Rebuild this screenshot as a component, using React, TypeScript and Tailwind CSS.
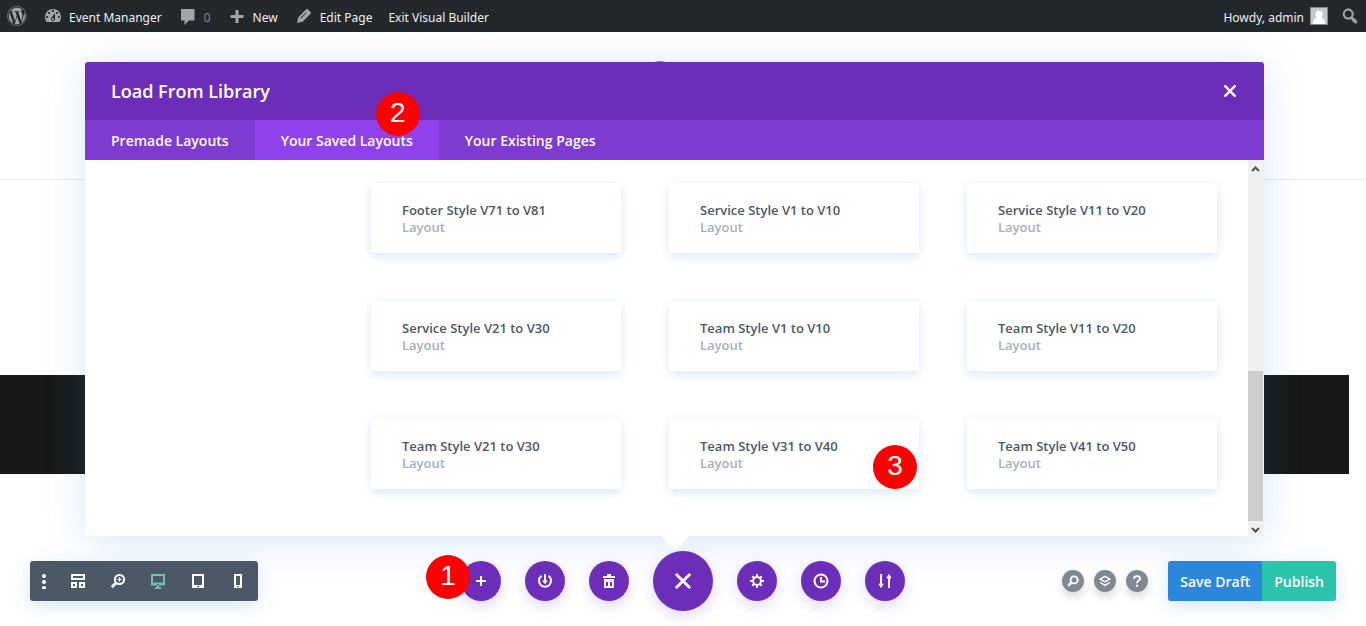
import type { ReactNode } from 'react'
import { FaWordpress } from 'react-icons/fa'

const layouts = [
  'Footer Style V71 to V81',
  'Service Style V1 to V10',
  'Service Style V11 to V20',
  'Service Style V21 to V30',
  'Team Style V1 to V10',
  'Team Style V11 to V20',
  'Team Style V21 to V30',
  'Team Style V31 to V40',
  'Team Style V41 to V50',
]

function Marker({ children, className }: { children: ReactNode; className: string }) {
  return (
    <span
      className={`absolute z-10 flex size-11 items-center justify-center rounded-full bg-[#ff0000] pb-0.5 font-['Liberation_Sans',sans-serif] text-[28px] leading-none font-normal text-white ${className}`}
    >
      {children}
    </span>
  )
}

function DashIcon({ d }: { d: string }) {
  return (
    <svg viewBox="0 0 20 20" className="size-5 shrink-0 fill-[#a0a5aa]" aria-hidden="true">
      <path d={d} />
    </svg>
  )
}

function Glyph({ children, size = 16 }: { children: ReactNode; size?: number }) {
  return (
    <svg width={size} height={size} viewBox="0 0 16 16" fill="none" stroke="currentColor" strokeWidth="2" aria-hidden="true">
      {children}
    </svg>
  )
}

function AdminLink({ href, icon, children }: { href: string; icon?: string; children: ReactNode }) {
  return (
    <a href={href} className="flex items-center gap-1.5">
      {icon && <DashIcon d={icon} />}
      <span className="pt-1">{children}</span>
    </a>
  )
}

function AdminBar() {
  return (
    <header className="flex h-8 items-center justify-between bg-[#23282d] pr-1.5 pl-[7px] font-['Noto_Sans',sans-serif] text-[12px] text-[#eeeeee]">
      <nav className="flex items-center gap-4 whitespace-nowrap">
        <a href="#wordpress" aria-label="About WordPress">
          <FaWordpress className="size-5 text-[#a0a5aa]" />
        </a>
        <AdminLink
          href="#site"
          icon="M3.76 16h12.48c1.1-1.37 1.76-3.11 1.76-5 0-4.42-3.58-8-8-8s-8 3.58-8 8c0 1.89.66 3.63 1.76 5zM10 4c.55 0 1 .45 1 1s-.45 1-1 1-1-.45-1-1 .45-1 1-1zM6 6c.55 0 1 .45 1 1s-.45 1-1 1-1-.45-1-1 .45-1 1-1zm8 0c.55 0 1 .45 1 1s-.45 1-1 1-1-.45-1-1 .45-1 1-1zm-5.37 5.55L12 7v6c0 1.1-.9 2-2 2s-2-.9-2-2c0-.57.24-1.08.63-1.45zM4 10c.55 0 1 .45 1 1s-.45 1-1 1-1-.45-1-1 .45-1 1-1zm12 0c.55 0 1 .45 1 1s-.45 1-1 1-1-.45-1-1 .45-1 1-1zm-5 3c0-.55-.45-1-1-1s-1 .45-1 1 .45 1 1 1 1-.45 1-1z"
        >
          Event Mananger
        </AdminLink>
        <AdminLink href="#comments" icon="M3 3H16.500v11.500H11L6.500 19v-4.500H3z">
          <span className="text-[#82878c]">0</span>
        </AdminLink>
        <AdminLink href="#new" icon="M16.500 9v3h-5v5h-3v-5h-5V9h5V4h3v5z">
          New
        </AdminLink>
        <AdminLink
          href="#edit"
          icon="M13.89 3.39l2.71 2.72c.46.46.42 1.24.03 1.64l-8.01 8.02-5.56 1.16 1.16-5.58s7.6-7.63 7.99-8.03c.39-.39 1.22-.39 1.68.07zm-2.200 3.300l-5.590 5.610 .55.55 5.540-5.650z"
        >
          Edit Page
        </AdminLink>
        <AdminLink href="#exit">Exit Visual Builder</AdminLink>
      </nav>
      <div className="flex items-center gap-3">
        <a href="#profile" className="flex items-center gap-1.5 whitespace-nowrap">
          <span className="pt-1">Howdy, admin</span>
          <svg viewBox="0 0 18 18" className="size-[18px]" aria-hidden="true">
            <path fill="#82878c" d="M0 0h18v18H0z" />
            <path fill="#c8c8c8" d="M1 1h16v16H1z" />
            <path fill="#fff" d="M9 3.500c2 0 3.500 1.500 3.500 3.700 0 1.500-.6 2.500-1.400 3.200 2.300.6 3.900 2.600 4.100 6.600H2.800c.2-4 1.800-6 4.100-6.600-.8-.7-1.400-1.700-1.400-3.200C5.500 5 7 3.500 9 3.500z" />
          </svg>
        </a>
        <button type="button" aria-label="Search">
          <DashIcon d="M12.140 4.180c1.870 1.870 2.110 4.750.72 6.890.12.1.22.21.36.31.2.16.47.36.81.59.34.24.56.39.66.47.42.31.73.57.94.78.32.32.6.65.84 1 .25.35.44.69.59 1.040.14.35.21.68.18 1-.02.32-.14.59-.36.81s-.49.34-.81.36c-.31.02-.65-.04-.99-.19-.35-.14-.7-.34-1.040-.59-.35-.24-.68-.52-1-.84-.21-.21-.47-.52-.77-.93-.1-.13-.25-.35-.47-.66-.22-.32-.4-.57-.56-.78-.16-.2-.29-.35-.44-.5-2.070 1.090-4.690.76-6.440-.98-2.140-2.150-2.140-5.640 0-7.780 2.150-2.150 5.630-2.150 7.780 0zm-1.410 6.360c1.360-1.370 1.360-3.580 0-4.950-1.370-1.370-3.590-1.370-4.950 0-1.370 1.370-1.370 3.580 0 4.950 1.360 1.370 3.580 1.370 4.950 0z" />
        </button>
      </div>
    </header>
  )
}

// The page being edited, seen around the modal
function Canvas() {
  return (
    <div className="absolute inset-0 flex flex-col" aria-hidden="true">
      <div className="flex h-[148px] justify-center border-b border-[#eeeeee] pt-[29px] pr-[46px]">
        <div className="size-8 rounded-full bg-[#7f8894]" />
      </div>
      <div className="mt-[195px] mr-[17px] h-[99px] bg-[#171917]" />
    </div>
  )
}

function LayoutCard({ name, children }: { name: string; children?: ReactNode }) {
  return (
    <li className="relative h-[70px] rounded-[3px] bg-white text-[13px] font-semibold shadow-[0_5px_10px_rgba(43,135,218,0.12),0_0_10px_rgba(43,135,218,0.08)]">
      <a href="#layout" className="block py-[19px] pl-[31px] leading-[17px] text-[#4c5866]">
        {name}
        <span className="block text-[#a2b0c1]">Layout</span>
      </a>
      {children}
    </li>
  )
}

function ScrollRail() {
  return (
    <div className="flex w-4 shrink-0 flex-col bg-[#f0f0f0] pr-px text-[#505050]">
      <button type="button" aria-label="Scroll up" className="flex h-[17px] items-center justify-center">
        <svg width="9" height="6" viewBox="0 0 9 6" fill="none" stroke="currentColor" strokeWidth="2">
          <path d="M1 5l3.500-3.500L8 5" />
        </svg>
      </button>
      <div className="mt-[194px] flex-1 bg-[#cdcdcd]" />
      <button type="button" aria-label="Scroll down" className="flex h-[15px] items-center justify-center pt-0.5">
        <svg width="9" height="6" viewBox="0 0 9 6" fill="none" stroke="currentColor" strokeWidth="2">
          <path d="M1 1l3.500 3.500L8 1" />
        </svg>
      </button>
    </div>
  )
}

function LibraryModal() {
  return (
    <section
      aria-label="Load From Library"
      className="relative mr-[102px] ml-[85px] rounded-[3px] bg-white shadow-[0_5px_40px_rgba(43,135,218,0.2)]"
    >
      <div className="flex h-[58px] items-center justify-between rounded-t-[3px] bg-[#6c2eb9] px-[26px] text-white">
        <h1 className="text-[18px] font-semibold">Load From Library</h1>
        <button type="button" aria-label="Close">
          <Glyph>
            <path strokeWidth="2.400" strokeLinecap="round" d="M3.200 3.200l9.600 9.600M12.800 3.200l-9.600 9.600" />
          </Glyph>
        </button>
      </div>
      <div className="flex h-10 bg-[#7e3bd0] text-[14px] font-semibold whitespace-nowrap text-white">
        <button type="button" className="px-[26px] pt-px">Premade Layouts</button>
        <button type="button" className="relative bg-[#8f42ec] px-[26px] pt-px">
          Your Saved Layouts
          <Marker className="-top-7 right-[19px]">2</Marker>
        </button>
        <button type="button" className="px-[26px] pt-px">Your Existing Pages</button>
      </div>
      <div className="flex">
        <ul className="grid flex-1 grid-cols-3 gap-12 pt-[23px] pr-[31px] pb-[47px] pl-[286px]">
          {layouts.map((name) => (
            <LayoutCard key={name} name={name}>
              {name === 'Team Style V31 to V40' && <Marker className="right-0.5 bottom-0">3</Marker>}
            </LayoutCard>
          ))}
        </ul>
        <ScrollRail />
      </div>
      <svg width="28" height="14" viewBox="0 0 28 14" className="absolute top-full left-1/2 -translate-x-1/2 fill-white">
        <path d="M0 0h28L14 14z" />
      </svg>
    </section>
  )
}

function ViewBar() {
  return (
    <div className="flex h-10 justify-self-start rounded-[3px] bg-[#4c5866] text-white shadow-[0_5px_20px_rgba(43,135,218,0.2)]">
      <button type="button" aria-label="More options" className="flex w-7 items-center justify-center">
        <Glyph>
          <g fill="currentColor" stroke="none">
            <circle cx="8" cy="3" r="2" />
            <circle cx="8" cy="9" r="2" />
            <circle cx="8" cy="15" r="2" />
          </g>
        </Glyph>
      </button>
      <button type="button" aria-label="Wireframe view" className="flex w-10 items-center justify-center">
        <Glyph>
          <path d="M2 2h12v4H2zM2 10h4v4H2zM10 10h4v4h-4z" />
        </Glyph>
      </button>
      <button type="button" aria-label="Zoom" className="flex w-10 items-center justify-center">
        <Glyph>
          <circle cx="9.500" cy="6.500" r="4.600" />
          <path strokeLinecap="round" strokeWidth="3" d="M5.500 10.500l-2.800 2.800" />
          <path strokeWidth="1.200" d="M9.500 4.300v4.400M7.300 6.500h4.400" />
        </Glyph>
      </button>
      <button type="button" aria-label="Desktop view" className="flex w-10 items-center justify-center text-[#70c3a9]">
        <Glyph>
          <path d="M2 2h12v9.500H2z" />
          <path d="M2 10.500h12M5 15h6M8 12v3" />
          <path stroke="#4c5866" strokeWidth="1" d="M7 11.500h2" />
        </Glyph>
      </button>
      <button type="button" aria-label="Tablet view" className="flex w-10 items-center justify-center">
        <Glyph>
          <path d="M3 2h10v12H3zM3 13h10" />
          <path stroke="#4c5866" strokeWidth="1" d="M7 13.500h2" />
        </Glyph>
      </button>
      <button type="button" aria-label="Phone view" className="flex w-10 items-center justify-center">
        <Glyph>
          <path d="M5 2h6v12H5zM5 13h6" />
          <path stroke="#4c5866" strokeWidth="1" d="M7 13.500h2" />
        </Glyph>
      </button>
    </div>
  )
}

function RoundButton({ label, big, marker, children }: { label: string; big?: boolean; marker?: ReactNode; children: ReactNode }) {
  return (
    <button
      type="button"
      aria-label={label}
      className={`relative flex items-center justify-center rounded-full bg-[#6c2eb9] text-white shadow-[0_5px_15px_rgba(103,58,183,0.2)] ${big ? 'size-[60px]' : 'size-10'}`}
    >
      {children}
      {marker}
    </button>
  )
}

function PageBar() {
  return (
    <div className="flex items-center gap-6">
      <RoundButton label="Load from library" marker={<Marker className="-top-1.5 -left-[35px]">1</Marker>}>
        <Glyph>
          <path d="M8 3v10M3 8h10" />
        </Glyph>
      </RoundButton>
      <RoundButton label="Save to library">
        <Glyph>
          <path strokeLinecap="round" d="M4 3.300a6 6 0 1 0 8 0" />
          <path d="M8 1v8" />
          <path fill="currentColor" stroke="none" d="M5 7.500h6L8 11.300z" />
        </Glyph>
      </RoundButton>
      <RoundButton label="Clear layout">
        <Glyph>
          <path d="M2 4h12M6 2h4" />
          <path fill="currentColor" fillRule="evenodd" stroke="none" d="M3 6h10v9H3zM5 9v4h2V9zM9 9v4h2V9z" />
        </Glyph>
      </RoundButton>
      <RoundButton label="Close settings bar" big>
        <Glyph>
          <path strokeWidth="2.800" strokeLinecap="round" d="M1.700 1.700l12.600 12.600M14.300 1.700L1.700 14.300" />
        </Glyph>
      </RoundButton>
      <RoundButton label="Page settings">
        <Glyph>
          <circle cx="8" cy="8" r="3.900" />
          <path d="M8 1v2.500M8 12.500V15M1 8h2.500M12.500 8H15M3.300 3.300l1.700 1.700M11 11l1.700 1.700M12.700 3.300L11 5M5 11l-1.700 1.700" />
        </Glyph>
      </RoundButton>
      <RoundButton label="Editing history">
        <Glyph>
          <circle cx="8" cy="8" r="6.500" />
          <path d="M8 4v4.500h4" />
        </Glyph>
      </RoundButton>
      <RoundButton label="Portability">
        <Glyph>
          <path d="M4 1v11M12 4v11" />
          <path fill="currentColor" strokeWidth="1" strokeLinejoin="round" d="M2 11h4l-2 3.500zM10 5h4l-2-3.500z" />
        </Glyph>
      </RoundButton>
    </div>
  )
}

function HelpButton({ label, children }: { label: string; children: ReactNode }) {
  return (
    <button
      type="button"
      aria-label={label}
      className="flex size-[22px] items-center justify-center rounded-full bg-[#7f8894] text-white shadow-[0_5px_10px_rgba(0,0,0,0.15)]"
    >
      {children}
    </button>
  )
}

function PublishBar() {
  return (
    <div className="flex items-center gap-5 justify-self-end">
      <div className="flex gap-2.5">
        <HelpButton label="Find">
          <Glyph size={12}>
            <circle cx="9.500" cy="6.500" r="4.700" strokeWidth="2.500" />
            <path strokeLinecap="round" strokeWidth="3.500" d="M5.500 10.500l-2.800 2.800" />
          </Glyph>
        </HelpButton>
        <HelpButton label="Layers">
          <Glyph size={12}>
            <path strokeWidth="1.800" d="M1.500 5.500L8 1.800l6.500 3.700L8 9.200zM1.500 10L8 13.800l6.500-3.800" />
          </Glyph>
        </HelpButton>
        <HelpButton label="Help">
          <Glyph size={12}>
            <path strokeWidth="2.600" d="M4 5c0-2.300 1.800-3.500 4-3.500s4 1.300 4 3.400C12 7.500 8 7.500 8 11M8 13v2.800" />
          </Glyph>
        </HelpButton>
      </div>
      <div className="flex h-10 overflow-hidden rounded-[3px] text-[14px] font-semibold whitespace-nowrap text-white shadow-[0_5px_20px_rgba(43,135,218,0.2)]">
        <button type="button" className="bg-[#2b87da] px-3">Save Draft</button>
        <button type="button" className="bg-[#29c4a9] px-3">Publish</button>
      </div>
    </div>
  )
}

export default function App() {
  return (
    <div className="flex min-h-screen flex-col bg-white font-['Open_Sans',sans-serif]">
      <AdminBar />
      <main className="relative flex-1 overflow-hidden">
        <Canvas />
        <div className="relative pt-[30px]">
          <LibraryModal />
          <div className="relative mt-[15px] grid grid-cols-[1fr_auto_1fr] items-center px-[30px] pb-[15px]">
            <ViewBar />
            <PageBar />
            <PublishBar />
          </div>
        </div>
      </main>
    </div>
  )
}
